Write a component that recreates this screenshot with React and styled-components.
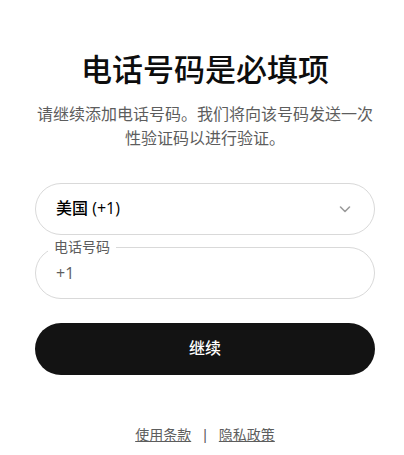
import React from "react";
import styled, { createGlobalStyle } from "styled-components";

const GlobalStyle = createGlobalStyle`
  * { box-sizing: border-box; }
  body {
    margin: 0;
    background: #fff;
    color: #0d0d0d;
    font-family: "Liberation Sans", "Noto Sans CJK SC", sans-serif;
    font-size: 16px;
    line-height: 24px;
  }
`;

const Page = styled.main`
  max-width: 404px;
  margin: 0 auto;
  padding: 47px 29px 0 35px;
  display: flex;
  flex-direction: column;
  align-items: center;
`;

const Title = styled.h1`
  margin: 0;
  font-size: 31px;
  line-height: 48px;
  font-weight: 500;
  text-align: center;
`;

const Lead = styled.p`
  margin: 8px 0 32px;
  color: #5d5d5d;
  text-align: center;
`;

const Form = styled.form`
  width: 100%;
  display: flex;
  flex-direction: column;
`;

const Field = styled.div`
  position: relative;
  display: flex;
  align-items: center;
  height: 52px;
  margin-bottom: ${(p) => p.$gap};
`;

const Select = styled.select`
  appearance: none;
  width: 100%;
  height: 100%;
  padding: 0 48px 2px 20px;
  border: 1px solid #d9d9d9;
  border-radius: 26px;
  background: #fff;
  color: #000;
  font: 500 16px "Open Sans", "Noto Sans CJK SC", sans-serif;
`;

const Input = styled.input`
  width: 100%;
  height: 100%;
  padding: 0 20px;
  border: 1px solid #d9d9d9;
  border-radius: 26px;
  background: #fff;
  color: #5d5d5d;
  font: 16px "Open Sans", "Noto Sans CJK SC", sans-serif;
`;

const FloatingLabel = styled.label`
  position: absolute;
  top: -10px;
  left: 13px;
  padding: 0 6px;
  background: #fff;
  color: #5d5d5d;
  font-size: 14px;
  line-height: 20px;
`;

const Chevron = styled.svg`
  position: absolute;
  right: 22px;
  width: 16px;
  height: 16px;
  pointer-events: none;
`;

const Submit = styled.button`
  height: 52px;
  border: 0;
  border-radius: 26px;
  background: #131313;
  color: #fff;
  font: inherit;
  font-weight: 500;
`;

const Footer = styled.footer`
  display: flex;
  gap: 12px;
  margin-top: 50px;
  color: #5d5d5d;
  font-size: 14px;
  line-height: 20px;
`;

const Link = styled.a`
  color: inherit;
`;

export default function App() {
  return (
    <>
      <GlobalStyle />
      <Page>
        <Title>电话号码是必填项</Title>
        <Lead>请继续添加电话号码。我们将向该号码发送一次性验证码以进行验证。</Lead>
        <Form>
          <Field $gap="12px">
            <Select aria-label="国家/地区" defaultValue="us">
              <option value="us">美国 (+1)</option>
            </Select>
            <Chevron viewBox="0 0 16 16" fill="none" stroke="#9b9b9b" strokeWidth="1.6" strokeLinecap="round" strokeLinejoin="round" aria-hidden="true">
              <path d="M3.5 6l4.5 4.5L12.5 6" />
            </Chevron>
          </Field>
          <Field $gap="24px">
            <Input id="phone" type="tel" defaultValue="+1" />
            <FloatingLabel htmlFor="phone">电话号码</FloatingLabel>
          </Field>
          <Submit type="button">继续</Submit>
        </Form>
        <Footer>
          <Link href="#terms">使用条款</Link>
          <span>|</span>
          <Link href="#privacy">隐私政策</Link>
        </Footer>
      </Page>
    </>
  );
}
